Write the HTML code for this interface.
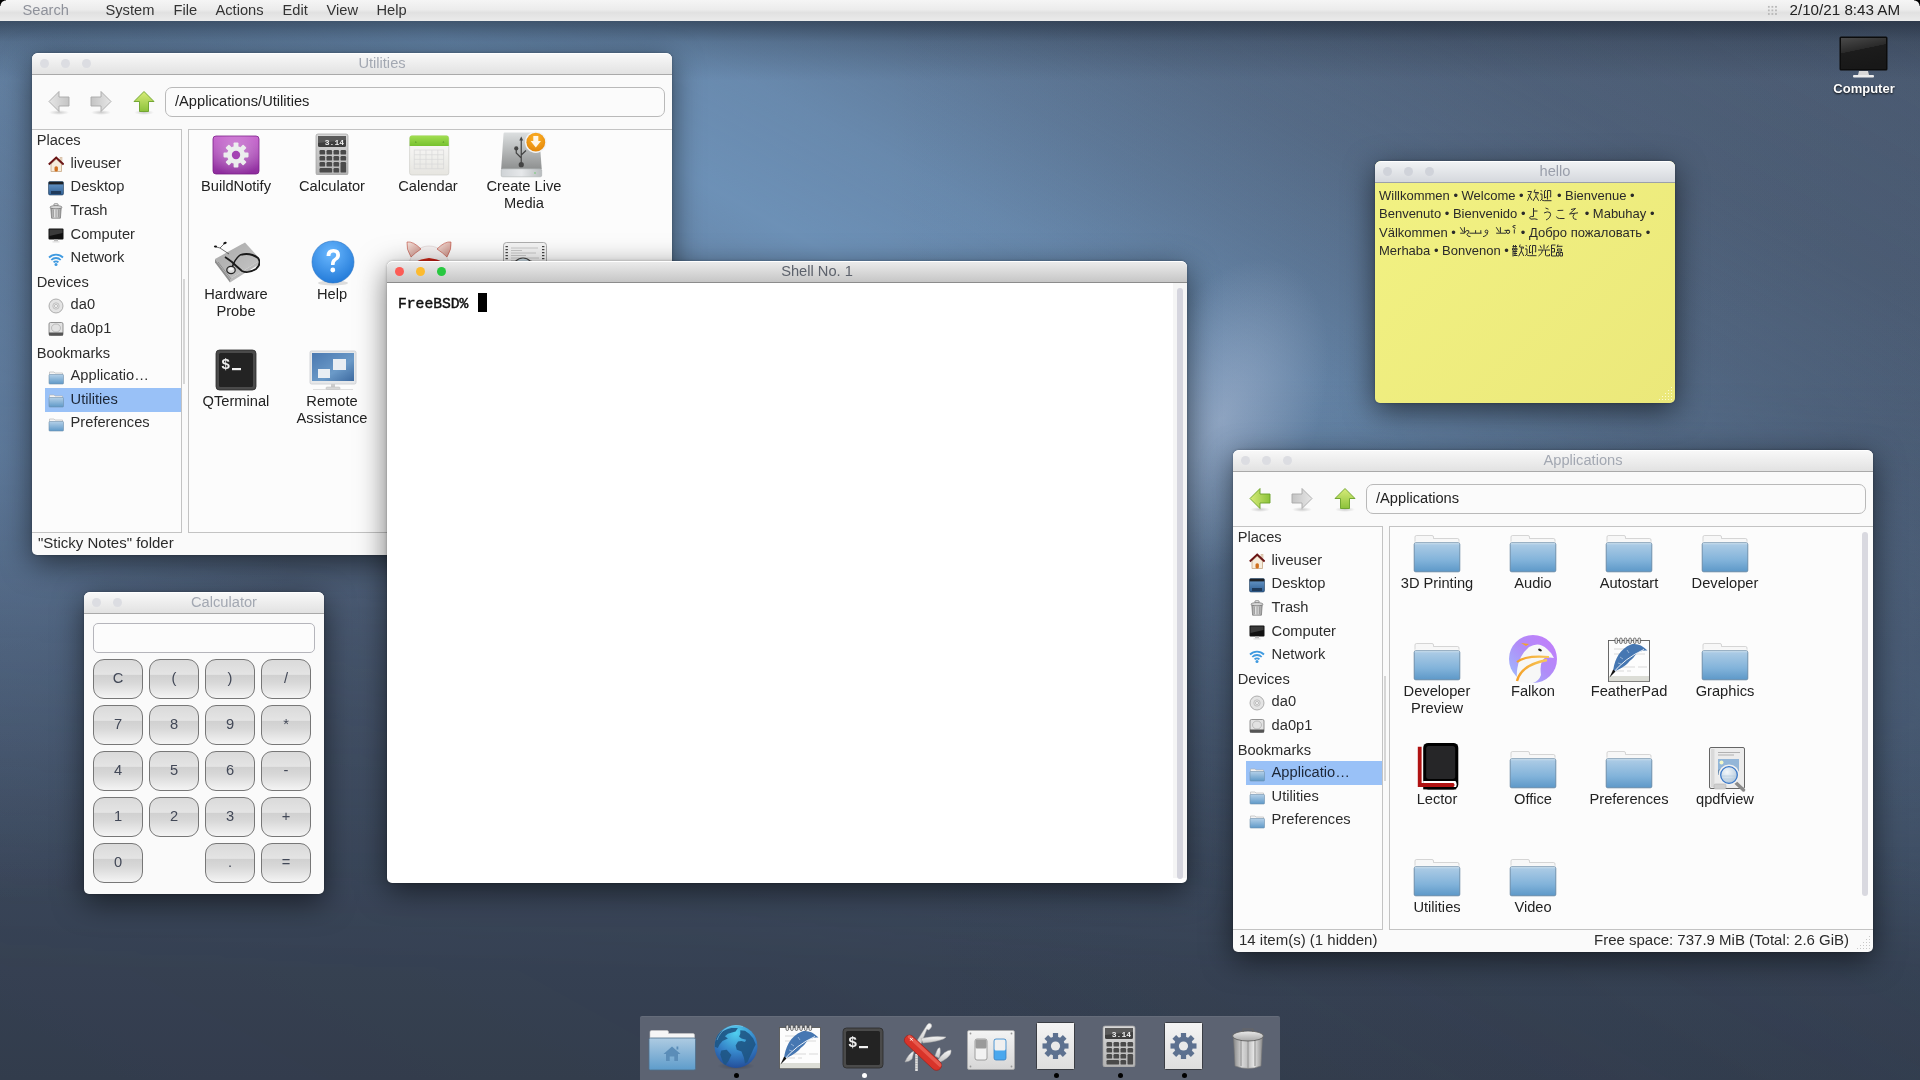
<!DOCTYPE html>
<html><head><meta charset="utf-8">
<style>*{box-sizing:border-box}
html,body{margin:0;padding:0}
body{width:1920px;height:1080px;overflow:hidden;position:relative;font-family:"Liberation Sans",sans-serif;font-size:14.67px;color:#2a2a2a;background:#47566d}
svg{display:block}
#bg{position:absolute;left:0;top:0;width:1920px;height:1080px;overflow:hidden;
background:linear-gradient(180deg,#4e5d74 0%,#4a586e 30%,#3f4a5e 58%,#374254 82%,#323b4b 100%);}
#bg div{position:absolute}
#mbshadow{left:0;top:21px;width:1920px;height:60px;background:linear-gradient(180deg,rgba(18,26,38,0.5),rgba(18,26,38,0.18) 35%,rgba(18,26,38,0))}
#menubar{position:absolute;will-change:transform;left:0;top:0;width:1920px;height:21px;background:linear-gradient(180deg,#f5f5f5 0%,#ececec 45%,#e1e1e1 60%,#ebebeb 100%)}
#menubar span{position:absolute;top:2px;font-size:14.67px;color:#333;line-height:17px;white-space:nowrap}
.grip{position:absolute;width:11px;height:11px;background-image:radial-gradient(circle,#b8b8b8 0.9px,transparent 1.1px);background-size:3.6px 3.6px}
.win{position:absolute;will-change:transform;background:#fafafa;border-radius:6px 6px 5px 5px;box-shadow:0 8px 30px rgba(0,0,0,0.55),0 0 3px rgba(0,0,0,0.3)}
.tb{position:absolute;left:0;top:0;right:0;height:22px;border-radius:6px 6px 0 0;background:linear-gradient(180deg,#f8f8f8,#e2e2e2);border-bottom:1px solid #a9a9a9;border-top:1px solid #fff}
.tb .t{position:absolute;right:0;top:0px;text-align:center;color:#a3a8b2;font-size:14.67px;line-height:18px;white-space:nowrap}
.tl{position:absolute;top:5px;width:9px;height:9px;border-radius:50%;background:#dcdde2}
.act .tb{background:linear-gradient(180deg,#ebebeb,#c6c6c6);border-bottom:1px solid #8c8c8c}
.act .tb .t{color:#5d626c}
.pf{position:absolute;border:1px solid #b9b9b9;border-radius:7px;background:#fbfbfb;color:#222;padding-left:9px;line-height:27px;white-space:nowrap}
.frame{position:absolute;border:1px solid #c3c3c3;background:#fcfcfc}
.sb{position:absolute;white-space:nowrap;line-height:17px;color:#2d2d2d}
.style2{color:#1c2636}
.sel{position:absolute;background:#99c1f7}
.ic{position:absolute}
.lbl{position:absolute;width:96px;text-align:center;line-height:17px;color:#222;white-space:nowrap}
.status{position:absolute;color:#2b2b2b;white-space:nowrap;line-height:17px;font-size:15px}
.sbar{position:absolute;background:#d9d9e0;border-radius:3px}
.cdisp{position:absolute;border:1px solid #b5b5bb;border-radius:5px;background:#fcfcfc}
.cbtn{position:absolute;width:49.5px;height:39.5px;border:1px solid #777;border-radius:11px;background:linear-gradient(180deg,#dadada 0%,#e4e4e4 38%,#d0d0d0 39%,#d8d8d8 60%,#f4f4f4 100%);text-align:center;color:#424857;line-height:37px;font-size:14.67px}
.note{position:absolute;left:4px;top:26px;font-size:13px;line-height:18.4px;color:#2a2a2a;white-space:nowrap}
.term{position:absolute;left:11px;top:34px;font-family:"Liberation Mono",monospace;font-weight:normal;-webkit-text-stroke:0.45px #111;font-size:14.67px;line-height:19px;color:#111;white-space:pre}
.cur{position:absolute;left:80px;top:-2px;width:9px;height:19px;background:#000}
.strack{position:absolute;right:0;top:22px;width:14px;bottom:5px;background:#f5f5f5}
.shandle{position:absolute;right:4px;top:27px;width:6px;bottom:4px;border-radius:3px;background:#d5d5de}
.deskicon{position:absolute}
.desklbl{position:absolute;will-change:transform;text-align:center;color:#fff;font-weight:bold;font-size:13px;text-shadow:0 1px 2px rgba(0,0,0,0.9)}
#dock{position:absolute;will-change:transform;left:640px;top:1016px;width:640px;height:64px;background:#5c6372;border-radius:2px 2px 0 0;box-shadow:inset 0 1px 0 rgba(255,255,255,0.06)}
.dot{position:absolute;width:5px;height:5px;border-radius:50%}
.grip2{position:absolute;right:3px;bottom:3px;width:14px;height:14px;background-image:radial-gradient(circle,#c8c8c8 0.8px,transparent 1px);background-size:3px 3px;clip-path:polygon(100% 0,100% 100%,0 100%)}
.split{position:absolute;width:2px;height:105px;background:#d6d6d6}
.corner{position:absolute;width:6px;height:6px;background:radial-gradient(circle at 6px 6px,transparent 5px,#000 6px);z-index:10}
.gap{display:inline-block;height:1px}
.glyphs{position:absolute;left:0;top:0}
</style></head><body>
<div id="bg">
 <div style="left:0;top:0;width:1920px;height:1080px;background:linear-gradient(29deg,rgba(122,166,210,0.1) 0%,rgba(122,166,210,0.2) 25%,rgba(122,166,210,0.35) 40%,rgba(122,166,210,0.55) 52%,rgba(122,166,210,0.72) 60%,rgba(122,166,210,0.62) 66%,rgba(122,166,210,0.42) 72%,rgba(122,166,210,0.25) 78%,rgba(122,166,210,0.12) 86%,rgba(122,166,210,0.05) 100%);-webkit-mask-image:linear-gradient(180deg,#000 0%,#000 35%,rgba(0,0,0,0.5) 60%,rgba(0,0,0,0.1) 90%)"></div>
 <div style="left:0;top:0;width:1920px;height:1080px;background:linear-gradient(90deg,rgba(28,36,50,0) 45%,rgba(28,36,50,0.1) 100%)"></div>
 <div style="left:-300px;top:0px;width:600px;height:900px;border-radius:50%;background:radial-gradient(closest-side,rgba(105,140,180,0.5),rgba(105,140,180,0))"></div>
 <div style="left:1125px;top:250px;width:190px;height:340px;transform:rotate(22deg);background:radial-gradient(closest-side,rgba(170,185,210,0.6),rgba(170,185,210,0))"></div>
 <div id="mbshadow"></div>
</div>
<div id="menubar">
 <span style="left:22.5px;color:#8e919a">Search</span>
 <span style="left:105.5px">System</span>
 <span style="left:173.5px">File</span>
 <span style="left:215.5px">Actions</span>
 <span style="left:282.5px">Edit</span>
 <span style="left:326.5px">View</span>
 <span style="left:376.5px">Help</span>
 <div class="grip" style="left:1767px;top:5px"></div>
 <span style="left:1789.5px;top:1px;color:#222;font-size:15.2px">2/10/21 8:43 AM</span>
</div>

<div class="deskicon" style="left:1839px;top:36px">
 <svg width="50" height="43" viewBox="0 0 50 43"><defs><linearGradient id="mong" x1="0" y1="0" x2="0.3" y2="1"><stop offset="0" stop-color="#4a4a4a"/><stop offset="0.45" stop-color="#2a2a2a"/><stop offset="0.46" stop-color="#1c1c1c"/><stop offset="1" stop-color="#181818"/></linearGradient></defs>
 <rect x="0.5" y="0.5" width="48" height="34" rx="1.5" fill="#0c0c0c"/><rect x="2" y="2" width="45" height="31" fill="url(#mong)"/>
 <path d="M20 35 H29 L30 39 H19 Z" fill="#d8d8d8"/><rect x="14" y="39" width="21" height="2.5" rx="1" fill="#ededed"/></svg>
</div>
<div class="desklbl" style="left:1814px;top:80.5px;width:100px">Computer</div>
<div class="corner" style="left:0;top:0"></div><div class="corner" style="right:0;top:0;transform:scaleX(-1)"></div>

<div class="win" id="util" style="left:32px;top:53px;width:640px;height:502px">
 <div class="tb"><div class="tl" style="left:8px"></div><div class="tl" style="left:29px"></div><div class="tl" style="left:50px"></div><div class="t" style="left:60px">Utilities</div></div>
 <div class="ic" style="left:15px;top:37px"><svg width="24" height="26" viewBox="0 0 24 26">
<defs><linearGradient id="agb0" x1="0" y1="0" x2="0" y2="1"><stop offset="0" stop-color="#e6e6e6"/><stop offset="1" stop-color="#c4c4c4"/></linearGradient>
<radialGradient id="asb0"><stop offset="0" stop-color="#000" stop-opacity="0.18"/><stop offset="1" stop-color="#000" stop-opacity="0"/></radialGradient></defs>
<ellipse cx="12" cy="22.5" rx="10" ry="2.5" fill="url(#asb0)"/>
<g transform="rotate(-90 12 11.5)"><path d="M12 1.5 L22 11.5 H16.5 V21.5 H7.5 V11.5 H2 Z" fill="url(#agb0)" stroke="#a8a8a8" stroke-width="0.9" stroke-linejoin="miter"/></g>
</svg></div><div class="ic" style="left:57px;top:37px"><svg width="24" height="26" viewBox="0 0 24 26">
<defs><linearGradient id="agf0" x1="0" y1="0" x2="0" y2="1"><stop offset="0" stop-color="#e6e6e6"/><stop offset="1" stop-color="#c4c4c4"/></linearGradient>
<radialGradient id="asf0"><stop offset="0" stop-color="#000" stop-opacity="0.18"/><stop offset="1" stop-color="#000" stop-opacity="0"/></radialGradient></defs>
<ellipse cx="12" cy="22.5" rx="10" ry="2.5" fill="url(#asf0)"/>
<g transform="rotate(90 12 11.5)"><path d="M12 1.5 L22 11.5 H16.5 V21.5 H7.5 V11.5 H2 Z" fill="url(#agf0)" stroke="#a8a8a8" stroke-width="0.9" stroke-linejoin="miter"/></g>
</svg></div><div class="ic" style="left:100px;top:37px"><svg width="24" height="26" viewBox="0 0 24 26">
<defs><linearGradient id="agu0" x1="0" y1="0" x2="0" y2="1"><stop offset="0" stop-color="#d8ec7a"/><stop offset="1" stop-color="#8cc23a"/></linearGradient>
<radialGradient id="asu0"><stop offset="0" stop-color="#000" stop-opacity="0.18"/><stop offset="1" stop-color="#000" stop-opacity="0"/></radialGradient></defs>
<ellipse cx="12" cy="22.5" rx="10" ry="2.5" fill="url(#asu0)"/>
<g transform="rotate(0 12 11.5)"><path d="M12 1.5 L22 11.5 H16.5 V21.5 H7.5 V11.5 H2 Z" fill="url(#agu0)" stroke="#6aa028" stroke-width="0.9" stroke-linejoin="miter"/></g>
</svg></div>
 <div class="pf" style="left:133px;top:34px;width:500px;height:30px">/Applications/Utilities</div>
 <div class="frame" style="left:0;top:76px;width:150px;height:404px;border-left:none"></div>
 <div class="frame" style="left:156px;top:76px;width:484px;height:404px;border-right:none"></div>
 <div class="split" style="left:151px;top:226px"></div>
 <div class="sel" style="left:13px;top:335.0px;width:136px;height:23.5px"></div><div class="sb" style="left:4.7px;top:79.2px">Places</div><div class="ic" style="left:16px;top:103.1px"><svg width="16" height="16" viewBox="0 0 16 16" >
<rect x="12" y="1.5" width="2" height="4" fill="#e9d9c4" stroke="#c9a98a" stroke-width="0.5"/>
<path d="M3 8 L3 15.5 L13.5 15.5 L13.5 8 L8.2 3.2 Z" fill="#f6ecdc" stroke="#c8a886" stroke-width="0.8"/>
<path d="M0.8 8.6 L8.2 1.6 L15.6 8.6" fill="none" stroke="#6a1414" stroke-width="2"/>
<rect x="6.5" y="10.2" width="3.4" height="5.3" rx="1.6" fill="#d0701e"/>
</svg></div><div class="sb" style="left:38.6px;top:101.8px">liveuser</div><div class="ic" style="left:16px;top:126.7px"><svg width="16" height="16" viewBox="0 0 16 16" >
<defs><linearGradient id="dkg" x1="0" y1="0" x2="0" y2="1"><stop offset="0" stop-color="#6b9bcc"/><stop offset="1" stop-color="#2f5e92"/></linearGradient></defs>
<rect x="0.5" y="1.5" width="15" height="13.5" rx="1.5" fill="url(#dkg)" stroke="#24405e" stroke-width="0.6"/>
<rect x="0.8" y="1.8" width="14.4" height="2.6" fill="#1d2126"/>
<rect x="3" y="11" width="10" height="3" fill="#1f3a5a"/>
</svg></div><div class="sb" style="left:38.6px;top:125.4px">Desktop</div><div class="ic" style="left:16px;top:150.3px"><svg width="16" height="16" viewBox="0 0 16 16" >
<defs><linearGradient id="tsg" x1="0" y1="0" x2="1" y2="0"><stop offset="0" stop-color="#9a9a9a"/><stop offset="0.4" stop-color="#e8e8e8"/><stop offset="1" stop-color="#a0a0a0"/></linearGradient></defs>
<rect x="6" y="0.8" width="4" height="2.2" rx="0.5" fill="none" stroke="#707070" stroke-width="0.8"/>
<path d="M2.8 5 L13.2 5 L12.4 15.2 L3.6 15.2 Z" fill="url(#tsg)" stroke="#707070" stroke-width="0.7"/>
<ellipse cx="8" cy="4.2" rx="6" ry="1.6" fill="#d8d8d8" stroke="#707070" stroke-width="0.7"/>
<path d="M5.3 6.5 V14 M8 6.5 V14.5 M10.7 6.5 V14" stroke="#8a8a8a" stroke-width="0.8"/>
</svg></div><div class="sb" style="left:38.6px;top:149.0px">Trash</div><div class="ic" style="left:16px;top:173.9px"><svg width="16" height="16" viewBox="0 0 16 16" >
<rect x="0.5" y="1.5" width="15" height="11" rx="1" fill="#111"/>
<path d="M1.5 2.5 H14.5 V6 L1.5 9 Z" fill="#3a3a3a"/>
<rect x="6" y="12.5" width="4" height="2" fill="#bbb"/>
<rect x="4.5" y="14.3" width="7" height="1.2" fill="#ddd"/>
</svg></div><div class="sb" style="left:38.6px;top:172.6px">Computer</div><div class="ic" style="left:16px;top:197.5px"><svg width="16" height="16" viewBox="0 0 16 16" >
<path d="M1 6.5 A10 10 0 0 1 15 6.5" fill="none" stroke="#3f9ae0" stroke-width="1.8"/>
<path d="M3.3 9 A6.5 6.5 0 0 1 12.7 9" fill="none" stroke="#3f9ae0" stroke-width="1.8"/>
<path d="M5.6 11.4 A3.2 3.2 0 0 1 10.4 11.4" fill="none" stroke="#3f9ae0" stroke-width="1.8"/>
<circle cx="8" cy="13.6" r="1.5" fill="#3f9ae0"/>
</svg></div><div class="sb" style="left:38.6px;top:196.2px">Network</div><div class="sb" style="left:4.7px;top:220.8px">Devices</div><div class="ic" style="left:16px;top:244.7px"><svg width="16" height="16" viewBox="0 0 16 16" >
<circle cx="8" cy="8" r="7" fill="#e4e4e4" stroke="#9d9d9d" stroke-width="0.8"/>
<circle cx="8" cy="8" r="3.2" fill="none" stroke="#b8b8b8" stroke-width="0.8"/>
<circle cx="8" cy="8" r="1.5" fill="#fff" stroke="#999" stroke-width="0.6"/>
</svg></div><div class="sb" style="left:38.6px;top:243.4px">da0</div><div class="ic" style="left:16px;top:268.3px"><svg width="16" height="16" viewBox="0 0 16 16" >
<rect x="1" y="1.5" width="14" height="13" rx="1.5" fill="#e2e2e2" stroke="#7a7a7a" stroke-width="0.8"/>
<ellipse cx="8" cy="7" rx="4.5" ry="4" fill="none" stroke="#aaa" stroke-width="0.7"/>
<rect x="1" y="11.5" width="14" height="3" fill="#555"/>
</svg></div><div class="sb" style="left:38.6px;top:267.0px">da0p1</div><div class="sb" style="left:4.7px;top:291.6px">Bookmarks</div><div class="ic" style="left:16px;top:315.5px"><svg width="16" height="16" viewBox="0 0 16 16" >
<path d="M1.5 3 H6 L7 4 H14.5 V7 H1.5 Z" fill="#f4f4f4" stroke="#b0b0b0" stroke-width="0.6"/>
<rect x="1" y="5.5" width="14.5" height="9.5" rx="0.8" fill="url(#fg16)" stroke="#6e90ad" stroke-width="0.6"/>
<defs><linearGradient id="fg16" x1="0" y1="0" x2="0" y2="1"><stop offset="0" stop-color="#b4d0e8"/><stop offset="1" stop-color="#5f99c8"/></linearGradient></defs>
</svg></div><div class="sb" style="left:38.6px;top:314.2px">Applicatio…</div><div class="ic" style="left:16px;top:339.1px"><svg width="16" height="16" viewBox="0 0 16 16" >
<path d="M1.5 3 H6 L7 4 H14.5 V7 H1.5 Z" fill="#f4f4f4" stroke="#b0b0b0" stroke-width="0.6"/>
<rect x="1" y="5.5" width="14.5" height="9.5" rx="0.8" fill="url(#fg16)" stroke="#6e90ad" stroke-width="0.6"/>
<defs><linearGradient id="fg16" x1="0" y1="0" x2="0" y2="1"><stop offset="0" stop-color="#b4d0e8"/><stop offset="1" stop-color="#5f99c8"/></linearGradient></defs>
</svg></div><div class="sb style2" style="left:38.6px;top:337.8px">Utilities</div><div class="ic" style="left:16px;top:362.7px"><svg width="16" height="16" viewBox="0 0 16 16" >
<path d="M1.5 3 H6 L7 4 H14.5 V7 H1.5 Z" fill="#f4f4f4" stroke="#b0b0b0" stroke-width="0.6"/>
<rect x="1" y="5.5" width="14.5" height="9.5" rx="0.8" fill="url(#fg16)" stroke="#6e90ad" stroke-width="0.6"/>
<defs><linearGradient id="fg16" x1="0" y1="0" x2="0" y2="1"><stop offset="0" stop-color="#b4d0e8"/><stop offset="1" stop-color="#5f99c8"/></linearGradient></defs>
</svg></div><div class="sb" style="left:38.6px;top:361.4px">Preferences</div>
 <div class="ic" style="left:180px;top:78px"><svg width="48" height="48" viewBox="0 0 48 48" >
<defs><linearGradient id="bng" x1="0" y1="0" x2="0" y2="1"><stop offset="0" stop-color="#c96bd0"/><stop offset="1" stop-color="#8c2b9c"/></linearGradient>
<radialGradient id="bnr" cx="0.5" cy="0.45" r="0.6"><stop offset="0" stop-color="#fff" stop-opacity="0.35"/><stop offset="1" stop-color="#fff" stop-opacity="0"/></radialGradient></defs>
<rect x="1" y="5" width="46" height="38" rx="3" fill="url(#bng)" stroke="#7a1d87" stroke-width="0.8"/>
<rect x="1" y="5" width="46" height="38" rx="3" fill="url(#bnr)"/>
<g transform="translate(24,23)" fill="#eef0f0">
<path d="M-2.3 -12 H2.3 L2.9 -8.6 L5.6 -7.5 L8.4 -9.5 L11.7 -6.2 L9.7 -3.4 L10.8 -0.7 L14 -0.1 V4.5 ... " fill="none"/>
</g>
<g transform="translate(24,24)">
<circle r="9" fill="#eceeee"/>
<g fill="#eceeee">
<rect x="-2.4" y="-12.5" width="4.8" height="6" rx="0.8"/>
<rect x="-2.4" y="6.5" width="4.8" height="6" rx="0.8"/>
<rect x="-12.5" y="-2.4" width="6" height="4.8" rx="0.8"/>
<rect x="6.5" y="-2.4" width="6" height="4.8" rx="0.8"/>
<rect x="-2.4" y="-12.5" width="4.8" height="6" rx="0.8" transform="rotate(45)"/>
<rect x="-2.4" y="-12.5" width="4.8" height="6" rx="0.8" transform="rotate(135)"/>
<rect x="-2.4" y="-12.5" width="4.8" height="6" rx="0.8" transform="rotate(225)"/>
<rect x="-2.4" y="-12.5" width="4.8" height="6" rx="0.8" transform="rotate(315)"/>
</g>
<circle r="4.2" fill="#a444b3"/>
</g>
</svg></div><div class="lbl" style="left:156px;top:125.0px">BuildNotify</div><div class="ic" style="left:281px;top:80px"><svg width="38" height="42" viewBox="0 0 38 42" >
<defs><linearGradient id="cgu" x1="0" y1="0" x2="0" y2="1"><stop offset="0" stop-color="#d8d8d8"/><stop offset="1" stop-color="#b4b4b4"/></linearGradient></defs>
<rect x="3" y="1" width="32" height="41" rx="2" fill="url(#cgu)" stroke="#a0a0a0" stroke-width="0.7"/>
<rect x="5" y="3" width="28" height="11" rx="1.5" fill="#3e3e3e"/>
<path d="M5 3 H33 V7 L5 10 Z" fill="#5a5a5a"/>
<text x="31" y="11.5" font-family="Liberation Mono" font-weight="bold" font-size="8" fill="#eee" text-anchor="end">3.14</text>
<rect x="6.5" y="17" width="5.6" height="4.6" rx="1.2" fill="#4a4a4a"/><rect x="13.5" y="17" width="5.6" height="4.6" rx="1.2" fill="#4a4a4a"/><rect x="20.5" y="17" width="5.6" height="4.6" rx="1.2" fill="#4a4a4a"/><rect x="27.5" y="17" width="5.6" height="4.6" rx="1.2" fill="#4a4a4a"/><rect x="6.5" y="23" width="5.6" height="4.6" rx="1.2" fill="#4a4a4a"/><rect x="13.5" y="23" width="5.6" height="4.6" rx="1.2" fill="#4a4a4a"/><rect x="20.5" y="23" width="5.6" height="4.6" rx="1.2" fill="#4a4a4a"/><rect x="27.5" y="23" width="5.6" height="4.6" rx="1.2" fill="#4a4a4a"/><rect x="6.5" y="29" width="5.6" height="4.6" rx="1.2" fill="#4a4a4a"/><rect x="13.5" y="29" width="5.6" height="4.6" rx="1.2" fill="#4a4a4a"/><rect x="20.5" y="29" width="5.6" height="4.6" rx="1.2" fill="#4a4a4a"/><rect x="6.5" y="35" width="12.6" height="4.6" rx="1.2" fill="#4a4a4a"/><rect x="20.5" y="35" width="5.6" height="4.6" rx="1.2" fill="#4a4a4a"/><rect x="27.5" y="29" width="5.6" height="10.6" rx="1.2" fill="#4a4a4a"/>
</svg></div><div class="lbl" style="left:252px;top:125.0px">Calculator</div><div class="ic" style="left:372px;top:77px"><svg width="48" height="48" viewBox="0 0 48 48" >
<defs><linearGradient id="calg" x1="0" y1="0" x2="0" y2="1"><stop offset="0" stop-color="#fbfbfb"/><stop offset="1" stop-color="#e6e5e0"/></linearGradient>
<linearGradient id="calh" x1="0" y1="0" x2="0" y2="1"><stop offset="0" stop-color="#a2de52"/><stop offset="1" stop-color="#76c12e"/></linearGradient></defs>
<rect x="5.6" y="6" width="39.2" height="39" rx="2.2" fill="url(#calg)" stroke="#cfcfca" stroke-width="0.7"/>
<path d="M5.6 8.2 Q5.6 5.5 8 5.5 H42.4 Q44.8 5.5 44.8 8.2 V16 H5.6 Z" fill="url(#calh)"/>
<path d="M10.8 12.6 L11.8 11.2 L12.8 12.6 Z M38.4 12.6 L39.4 11.2 L40.4 12.6 Z" fill="#4e8a22"/>
<rect x="10.2" y="20" width="29.5" height="18.8" fill="none" stroke="#d8d8d8" stroke-width="0.7"/>
<line x1="16.1" y1="20" x2="16.1" y2="38.8" stroke="#d8d8d8" stroke-width="0.7"/><line x1="22.0" y1="20" x2="22.0" y2="38.8" stroke="#d8d8d8" stroke-width="0.7"/><line x1="27.900000000000002" y1="20" x2="27.900000000000002" y2="38.8" stroke="#d8d8d8" stroke-width="0.7"/><line x1="33.8" y1="20" x2="33.8" y2="38.8" stroke="#d8d8d8" stroke-width="0.7"/><line x1="10.2" y1="24.7" x2="39.7" y2="24.7" stroke="#d8d8d8" stroke-width="0.7"/><line x1="10.2" y1="29.4" x2="39.7" y2="29.4" stroke="#d8d8d8" stroke-width="0.7"/><line x1="10.2" y1="34.1" x2="39.7" y2="34.1" stroke="#d8d8d8" stroke-width="0.7"/>
</svg></div><div class="lbl" style="left:348px;top:125.0px">Calendar</div><div class="ic" style="left:468px;top:77px"><svg width="48" height="48" viewBox="0 0 48 48" >
<defs><linearGradient id="lmg" x1="0" y1="0" x2="0" y2="1"><stop offset="0" stop-color="#dcdfe0"/><stop offset="1" stop-color="#8e9090"/></linearGradient>
<linearGradient id="lms" x1="0" y1="0" x2="1" y2="0"><stop offset="0" stop-color="#cfd3d6"/><stop offset="0.5" stop-color="#e6e8ea"/><stop offset="1" stop-color="#b8bcbe"/></linearGradient>
<radialGradient id="lmo" cx="0.5" cy="0.3" r="0.7"><stop offset="0" stop-color="#ffb428"/><stop offset="1" stop-color="#e4870a"/></radialGradient></defs>
<path d="M4.5 2.6 H37.5 Q39 2.6 39.2 4 L41.7 39 H1.2 L3.5 4 Q3.7 2.6 4.5 2.6 Z" fill="url(#lmg)"/>
<rect x="1.2" y="38.8" width="40.5" height="8" rx="1.5" fill="url(#lms)" stroke="#a5a9ab" stroke-width="0.5"/>
<circle cx="35" cy="43" r="0.8" fill="#6c6"/>
<path d="M21.25 9 V34.7 M16.25 18.4 V23 L21.25 28 M21.25 25 L26 20.5" stroke="#444" stroke-width="1.2" fill="none"/>
<path d="M19.3 10.5 L21.25 6.5 L23.2 10.5 Z" fill="#444"/>
<circle cx="21.25" cy="34.7" r="2.6" fill="#444"/><circle cx="16.25" cy="18.4" r="2.1" fill="#444"/>
<circle cx="35.8" cy="12.2" r="10.8" fill="#f2f4f6"/>
<circle cx="35.8" cy="12.2" r="9.4" fill="url(#lmo)"/>
<path d="M33.3 6 H38.3 V11 H41 L35.8 17.5 L30.6 11 H33.3 Z" fill="#fff6e6"/>
</svg></div><div class="lbl" style="left:444px;top:125.0px">Create Live</div><div class="lbl" style="left:444px;top:142.0px">Media</div><div class="ic" style="left:180px;top:185px"><svg width="48" height="48" viewBox="0 0 48 48" >
<defs><linearGradient id="hpg" x1="0" y1="0" x2="1" y2="1"><stop offset="0" stop-color="#a8a8a8"/><stop offset="1" stop-color="#c8c8c8"/></linearGradient></defs>
<path d="M3 21 L33 4.5 L49 22 L18 41 Z" fill="url(#hpg)"/>
<path d="M3 21 L18 41 L18 44.5 L3 24.5 Z" fill="#8e8e8e"/>
<path d="M18 41 L49 22 L49 25 L18 44.5 Z" fill="#b9b9b9"/>
<path d="M6 24 L19 41" stroke="#777" stroke-width="0.6"/>
<path d="M28 17 Q38 14 46 20 Q50 26 44 31 Q36 36 30 33 Q24 28 20 24 Q16 21 13 19" fill="none" stroke="#1a1a1a" stroke-width="1.8"/>
<path d="M28 17 Q22 22 20 30" fill="none" stroke="#1a1a1a" stroke-width="1.6"/>
<path d="M2.5 8.5 L8 10 L17 16 M12.5 5.5 L8 10" fill="none" stroke="#333" stroke-width="0.7"/>
<ellipse cx="3.5" cy="8.5" rx="1.6" ry="1.1" fill="#111"/>
<ellipse cx="13" cy="5" rx="1.8" ry="1.1" fill="#111" transform="rotate(-25 13 5)"/>
<ellipse cx="19" cy="32" rx="4.2" ry="3.6" fill="#d8d8d8" stroke="#222" stroke-width="1.2"/>
<ellipse cx="19" cy="31" rx="2.2" ry="1.6" fill="#f4f4f4"/>
</svg></div><div class="lbl" style="left:156px;top:232.5px">Hardware</div><div class="lbl" style="left:156px;top:249.5px">Probe</div><div class="ic" style="left:277px;top:186px"><svg width="48" height="48" viewBox="0 0 48 48" >
<defs><radialGradient id="hlg" cx="0.45" cy="0.3" r="0.75"><stop offset="0" stop-color="#6ab8ff"/><stop offset="1" stop-color="#1f77d6"/></radialGradient></defs>
<ellipse cx="24" cy="44" rx="15" ry="2.5" fill="#000" opacity="0.12"/>
<circle cx="24" cy="23" r="21" fill="url(#hlg)" stroke="#2a74c4" stroke-width="0.6"/>
<path d="M17.5 17 Q17.5 10 24.5 10 Q31 10 31 16 Q31 19.5 27.5 21.5 Q25.5 22.8 25.5 26 H22 Q21.8 21.5 24.8 19.6 Q27.2 18.2 27.2 16.2 Q27.2 13.6 24.4 13.6 Q21.5 13.6 21.4 17 Z" fill="#fff"/>
<circle cx="23.8" cy="31" r="2.4" fill="#fff"/>
</svg></div><div class="lbl" style="left:252px;top:232.5px">Help</div><div class="ic" style="left:373px;top:186px"><svg width="48" height="48" viewBox="0 0 48 48" >
<defs><radialGradient id="dvg" cx="0.35" cy="0.3" r="0.9"><stop offset="0" stop-color="#e83a1a"/><stop offset="0.6" stop-color="#b81010"/><stop offset="1" stop-color="#600505"/></radialGradient>
<linearGradient id="dvh" x1="0" y1="0" x2="1" y2="1"><stop offset="0" stop-color="#f7e6e0"/><stop offset="1" stop-color="#c98a80"/></linearGradient></defs>
<circle cx="24" cy="27" r="20" fill="#f6f2f2" stroke="#e2d8d8" stroke-width="0.8"/>
<path d="M3 26 Q6 13 24 11 Q42 13 45 26 Q44 46 24 47 Q4 46 3 26 Z" fill="url(#dvg)" transform="translate(0,8)"/>
<path d="M2 3 Q8 2 16 10 Q10 14 6 18 Q1 10 2 3 Z" fill="url(#dvh)" stroke="#c04a3a" stroke-width="0.6"/>
<path d="M46 3 Q40 2 32 10 Q38 14 42 18 Q47 10 46 3 Z" fill="url(#dvh)" stroke="#c04a3a" stroke-width="0.6"/>
</svg></div><div class="ic" style="left:470px;top:187px"><svg width="48" height="48" viewBox="0 0 48 48" >
<rect x="1.5" y="2.5" width="43" height="44" rx="3" fill="#f4f4f4" stroke="#9a9a9a" stroke-width="0.8"/>
<rect x="3.5" y="6" width="2.4" height="1.2" fill="#444"/><rect x="40" y="6" width="2.4" height="1.2" fill="#444"/><rect x="3.5" y="9" width="2.4" height="1.2" fill="#444"/><rect x="40" y="9" width="2.4" height="1.2" fill="#444"/><rect x="3.5" y="12" width="2.4" height="1.2" fill="#444"/><rect x="40" y="12" width="2.4" height="1.2" fill="#444"/><rect x="3.5" y="15" width="2.4" height="1.2" fill="#444"/><rect x="40" y="15" width="2.4" height="1.2" fill="#444"/><rect x="3.5" y="18" width="2.4" height="1.2" fill="#444"/><rect x="40" y="18" width="2.4" height="1.2" fill="#444"/><rect x="3.5" y="21" width="2.4" height="1.2" fill="#444"/><rect x="40" y="21" width="2.4" height="1.2" fill="#444"/><rect x="3.5" y="24" width="2.4" height="1.2" fill="#444"/><rect x="40" y="24" width="2.4" height="1.2" fill="#444"/><rect x="3.5" y="27" width="2.4" height="1.2" fill="#444"/><rect x="40" y="27" width="2.4" height="1.2" fill="#444"/><rect x="3.5" y="30" width="2.4" height="1.2" fill="#444"/><rect x="40" y="30" width="2.4" height="1.2" fill="#444"/><rect x="3.5" y="33" width="2.4" height="1.2" fill="#444"/><rect x="40" y="33" width="2.4" height="1.2" fill="#444"/><rect x="3.5" y="36" width="2.4" height="1.2" fill="#444"/><rect x="40" y="36" width="2.4" height="1.2" fill="#444"/><rect x="3.5" y="39" width="2.4" height="1.2" fill="#444"/><rect x="40" y="39" width="2.4" height="1.2" fill="#444"/><rect x="3.5" y="42" width="2.4" height="1.2" fill="#444"/><rect x="40" y="42" width="2.4" height="1.2" fill="#444"/>
<path d="M9 8 H36 M9 10.5 H20 M9 13 H34 M9 15.5 H24 M9 18 H37 M9 20.5 H30" stroke="#b5b5b5" stroke-width="0.7"/>
<circle cx="21" cy="28" r="10" fill="#cfe0ea" stroke="#444" stroke-width="1.2"/>
</svg></div><div class="ic" style="left:180px;top:293px"><svg width="48" height="48" viewBox="0 0 48 48" >
<rect x="4" y="4" width="40" height="40" rx="3.5" fill="#4a4a4a" stroke="#2a2a2a" stroke-width="0.8"/>
<rect x="7" y="7" width="34" height="34" rx="1.5" fill="#232323"/>
<text x="9.5" y="23" font-family="Liberation Sans" font-weight="bold" font-size="15" fill="#f0f0f0">$</text>
<rect x="20" y="22" width="9" height="2.2" fill="#f0f0f0"/>
</svg></div><div class="lbl" style="left:156px;top:340.2px">QTerminal</div><div class="ic" style="left:277px;top:295px"><svg width="48" height="48" viewBox="0 0 48 48" >
<defs><linearGradient id="rag" x1="0" y1="0" x2="1" y2="1"><stop offset="0" stop-color="#4a78b0"/><stop offset="0.6" stop-color="#6b9ac8"/><stop offset="1" stop-color="#3d6aa0"/></linearGradient></defs>
<rect x="1" y="3" width="46" height="33" rx="1.5" fill="#e6e8ea" stroke="#c9ccd0" stroke-width="0.8"/>
<rect x="3" y="5" width="42" height="28" fill="url(#rag)"/>
<rect x="24" y="11" width="13" height="11" fill="#e9eef3"/>
<rect x="9" y="21" width="12" height="9" fill="#e9eef3"/>
<rect x="22" y="36" width="4" height="3" fill="#ccc"/>
<rect x="17" y="39" width="14" height="2.5" rx="1" fill="#d8d8d8" stroke="#bbb" stroke-width="0.5"/>
<rect x="4" y="41" width="40" height="1" fill="#ccc" opacity="0.6"/>
</svg></div><div class="lbl" style="left:252px;top:340.2px">Remote</div><div class="lbl" style="left:252px;top:357.2px">Assistance</div>
 <div class="status" style="left:6px;top:480.5px">"Sticky Notes" folder</div>
</div>

<div class="win" id="calc" style="left:84px;top:592px;width:240px;height:302px">
 <div class="tb"><div class="tl" style="left:8px"></div><div class="tl" style="left:29px"></div><div class="t" style="left:40px">Calculator</div></div>
 <div class="cdisp" style="left:9px;top:31px;width:222px;height:30px"></div><div class="cbtn" style="left:9.3px;top:67px"><span>C</span></div><div class="cbtn" style="left:65.3px;top:67px"><span>(</span></div><div class="cbtn" style="left:121.3px;top:67px"><span>)</span></div><div class="cbtn" style="left:177.3px;top:67px"><span>/</span></div><div class="cbtn" style="left:9.3px;top:113px"><span>7</span></div><div class="cbtn" style="left:65.3px;top:113px"><span>8</span></div><div class="cbtn" style="left:121.3px;top:113px"><span>9</span></div><div class="cbtn" style="left:177.3px;top:113px"><span>*</span></div><div class="cbtn" style="left:9.3px;top:159px"><span>4</span></div><div class="cbtn" style="left:65.3px;top:159px"><span>5</span></div><div class="cbtn" style="left:121.3px;top:159px"><span>6</span></div><div class="cbtn" style="left:177.3px;top:159px"><span>-</span></div><div class="cbtn" style="left:9.3px;top:205px"><span>1</span></div><div class="cbtn" style="left:65.3px;top:205px"><span>2</span></div><div class="cbtn" style="left:121.3px;top:205px"><span>3</span></div><div class="cbtn" style="left:177.3px;top:205px"><span>+</span></div><div class="cbtn" style="left:9.3px;top:251px"><span>0</span></div><div class="cbtn" style="left:121.3px;top:251px"><span>.</span></div><div class="cbtn" style="left:177.3px;top:251px"><span>=</span></div>
</div>

<div class="win" id="apps" style="left:1233px;top:450px;width:640px;height:502px">
 <div class="tb"><div class="tl" style="left:8px"></div><div class="tl" style="left:29px"></div><div class="tl" style="left:50px"></div><div class="t" style="left:60px">Applications</div></div>
 <div class="ic" style="left:15px;top:37px"><svg width="24" height="26" viewBox="0 0 24 26">
<defs><linearGradient id="agb1" x1="0" y1="0" x2="0" y2="1"><stop offset="0" stop-color="#d8ec7a"/><stop offset="1" stop-color="#8cc23a"/></linearGradient>
<radialGradient id="asb1"><stop offset="0" stop-color="#000" stop-opacity="0.18"/><stop offset="1" stop-color="#000" stop-opacity="0"/></radialGradient></defs>
<ellipse cx="12" cy="22.5" rx="10" ry="2.5" fill="url(#asb1)"/>
<g transform="rotate(-90 12 11.5)"><path d="M12 1.5 L22 11.5 H16.5 V21.5 H7.5 V11.5 H2 Z" fill="url(#agb1)" stroke="#6aa028" stroke-width="0.9" stroke-linejoin="miter"/></g>
</svg></div><div class="ic" style="left:57px;top:37px"><svg width="24" height="26" viewBox="0 0 24 26">
<defs><linearGradient id="agf1" x1="0" y1="0" x2="0" y2="1"><stop offset="0" stop-color="#e6e6e6"/><stop offset="1" stop-color="#c4c4c4"/></linearGradient>
<radialGradient id="asf1"><stop offset="0" stop-color="#000" stop-opacity="0.18"/><stop offset="1" stop-color="#000" stop-opacity="0"/></radialGradient></defs>
<ellipse cx="12" cy="22.5" rx="10" ry="2.5" fill="url(#asf1)"/>
<g transform="rotate(90 12 11.5)"><path d="M12 1.5 L22 11.5 H16.5 V21.5 H7.5 V11.5 H2 Z" fill="url(#agf1)" stroke="#a8a8a8" stroke-width="0.9" stroke-linejoin="miter"/></g>
</svg></div><div class="ic" style="left:100px;top:37px"><svg width="24" height="26" viewBox="0 0 24 26">
<defs><linearGradient id="agu1" x1="0" y1="0" x2="0" y2="1"><stop offset="0" stop-color="#d8ec7a"/><stop offset="1" stop-color="#8cc23a"/></linearGradient>
<radialGradient id="asu1"><stop offset="0" stop-color="#000" stop-opacity="0.18"/><stop offset="1" stop-color="#000" stop-opacity="0"/></radialGradient></defs>
<ellipse cx="12" cy="22.5" rx="10" ry="2.5" fill="url(#asu1)"/>
<g transform="rotate(0 12 11.5)"><path d="M12 1.5 L22 11.5 H16.5 V21.5 H7.5 V11.5 H2 Z" fill="url(#agu1)" stroke="#6aa028" stroke-width="0.9" stroke-linejoin="miter"/></g>
</svg></div>
 <div class="pf" style="left:133px;top:34px;width:500px;height:30px">/Applications</div>
 <div class="frame" style="left:0;top:76px;width:150px;height:404px;border-left:none"></div>
 <div class="frame" style="left:156px;top:76px;width:484px;height:404px;border-right:none"></div>
 <div class="sbar" style="left:629px;top:82px;width:6px;height:364px"></div><div class="grip2"></div><div class="split" style="left:151px;top:676px;top:226px"></div>
 <div class="sel" style="left:13px;top:311.4px;width:136px;height:23.5px"></div><div class="sb" style="left:4.7px;top:79.2px">Places</div><div class="ic" style="left:16px;top:103.1px"><svg width="16" height="16" viewBox="0 0 16 16" >
<rect x="12" y="1.5" width="2" height="4" fill="#e9d9c4" stroke="#c9a98a" stroke-width="0.5"/>
<path d="M3 8 L3 15.5 L13.5 15.5 L13.5 8 L8.2 3.2 Z" fill="#f6ecdc" stroke="#c8a886" stroke-width="0.8"/>
<path d="M0.8 8.6 L8.2 1.6 L15.6 8.6" fill="none" stroke="#6a1414" stroke-width="2"/>
<rect x="6.5" y="10.2" width="3.4" height="5.3" rx="1.6" fill="#d0701e"/>
</svg></div><div class="sb" style="left:38.6px;top:101.8px">liveuser</div><div class="ic" style="left:16px;top:126.7px"><svg width="16" height="16" viewBox="0 0 16 16" >
<defs><linearGradient id="dkg" x1="0" y1="0" x2="0" y2="1"><stop offset="0" stop-color="#6b9bcc"/><stop offset="1" stop-color="#2f5e92"/></linearGradient></defs>
<rect x="0.5" y="1.5" width="15" height="13.5" rx="1.5" fill="url(#dkg)" stroke="#24405e" stroke-width="0.6"/>
<rect x="0.8" y="1.8" width="14.4" height="2.6" fill="#1d2126"/>
<rect x="3" y="11" width="10" height="3" fill="#1f3a5a"/>
</svg></div><div class="sb" style="left:38.6px;top:125.4px">Desktop</div><div class="ic" style="left:16px;top:150.3px"><svg width="16" height="16" viewBox="0 0 16 16" >
<defs><linearGradient id="tsg" x1="0" y1="0" x2="1" y2="0"><stop offset="0" stop-color="#9a9a9a"/><stop offset="0.4" stop-color="#e8e8e8"/><stop offset="1" stop-color="#a0a0a0"/></linearGradient></defs>
<rect x="6" y="0.8" width="4" height="2.2" rx="0.5" fill="none" stroke="#707070" stroke-width="0.8"/>
<path d="M2.8 5 L13.2 5 L12.4 15.2 L3.6 15.2 Z" fill="url(#tsg)" stroke="#707070" stroke-width="0.7"/>
<ellipse cx="8" cy="4.2" rx="6" ry="1.6" fill="#d8d8d8" stroke="#707070" stroke-width="0.7"/>
<path d="M5.3 6.5 V14 M8 6.5 V14.5 M10.7 6.5 V14" stroke="#8a8a8a" stroke-width="0.8"/>
</svg></div><div class="sb" style="left:38.6px;top:149.0px">Trash</div><div class="ic" style="left:16px;top:173.9px"><svg width="16" height="16" viewBox="0 0 16 16" >
<rect x="0.5" y="1.5" width="15" height="11" rx="1" fill="#111"/>
<path d="M1.5 2.5 H14.5 V6 L1.5 9 Z" fill="#3a3a3a"/>
<rect x="6" y="12.5" width="4" height="2" fill="#bbb"/>
<rect x="4.5" y="14.3" width="7" height="1.2" fill="#ddd"/>
</svg></div><div class="sb" style="left:38.6px;top:172.6px">Computer</div><div class="ic" style="left:16px;top:197.5px"><svg width="16" height="16" viewBox="0 0 16 16" >
<path d="M1 6.5 A10 10 0 0 1 15 6.5" fill="none" stroke="#3f9ae0" stroke-width="1.8"/>
<path d="M3.3 9 A6.5 6.5 0 0 1 12.7 9" fill="none" stroke="#3f9ae0" stroke-width="1.8"/>
<path d="M5.6 11.4 A3.2 3.2 0 0 1 10.4 11.4" fill="none" stroke="#3f9ae0" stroke-width="1.8"/>
<circle cx="8" cy="13.6" r="1.5" fill="#3f9ae0"/>
</svg></div><div class="sb" style="left:38.6px;top:196.2px">Network</div><div class="sb" style="left:4.7px;top:220.8px">Devices</div><div class="ic" style="left:16px;top:244.7px"><svg width="16" height="16" viewBox="0 0 16 16" >
<circle cx="8" cy="8" r="7" fill="#e4e4e4" stroke="#9d9d9d" stroke-width="0.8"/>
<circle cx="8" cy="8" r="3.2" fill="none" stroke="#b8b8b8" stroke-width="0.8"/>
<circle cx="8" cy="8" r="1.5" fill="#fff" stroke="#999" stroke-width="0.6"/>
</svg></div><div class="sb" style="left:38.6px;top:243.4px">da0</div><div class="ic" style="left:16px;top:268.3px"><svg width="16" height="16" viewBox="0 0 16 16" >
<rect x="1" y="1.5" width="14" height="13" rx="1.5" fill="#e2e2e2" stroke="#7a7a7a" stroke-width="0.8"/>
<ellipse cx="8" cy="7" rx="4.5" ry="4" fill="none" stroke="#aaa" stroke-width="0.7"/>
<rect x="1" y="11.5" width="14" height="3" fill="#555"/>
</svg></div><div class="sb" style="left:38.6px;top:267.0px">da0p1</div><div class="sb" style="left:4.7px;top:291.6px">Bookmarks</div><div class="ic" style="left:16px;top:315.5px"><svg width="16" height="16" viewBox="0 0 16 16" >
<path d="M1.5 3 H6 L7 4 H14.5 V7 H1.5 Z" fill="#f4f4f4" stroke="#b0b0b0" stroke-width="0.6"/>
<rect x="1" y="5.5" width="14.5" height="9.5" rx="0.8" fill="url(#fg16)" stroke="#6e90ad" stroke-width="0.6"/>
<defs><linearGradient id="fg16" x1="0" y1="0" x2="0" y2="1"><stop offset="0" stop-color="#b4d0e8"/><stop offset="1" stop-color="#5f99c8"/></linearGradient></defs>
</svg></div><div class="sb style2" style="left:38.6px;top:314.2px">Applicatio…</div><div class="ic" style="left:16px;top:339.1px"><svg width="16" height="16" viewBox="0 0 16 16" >
<path d="M1.5 3 H6 L7 4 H14.5 V7 H1.5 Z" fill="#f4f4f4" stroke="#b0b0b0" stroke-width="0.6"/>
<rect x="1" y="5.5" width="14.5" height="9.5" rx="0.8" fill="url(#fg16)" stroke="#6e90ad" stroke-width="0.6"/>
<defs><linearGradient id="fg16" x1="0" y1="0" x2="0" y2="1"><stop offset="0" stop-color="#b4d0e8"/><stop offset="1" stop-color="#5f99c8"/></linearGradient></defs>
</svg></div><div class="sb" style="left:38.6px;top:337.8px">Utilities</div><div class="ic" style="left:16px;top:362.7px"><svg width="16" height="16" viewBox="0 0 16 16" >
<path d="M1.5 3 H6 L7 4 H14.5 V7 H1.5 Z" fill="#f4f4f4" stroke="#b0b0b0" stroke-width="0.6"/>
<rect x="1" y="5.5" width="14.5" height="9.5" rx="0.8" fill="url(#fg16)" stroke="#6e90ad" stroke-width="0.6"/>
<defs><linearGradient id="fg16" x1="0" y1="0" x2="0" y2="1"><stop offset="0" stop-color="#b4d0e8"/><stop offset="1" stop-color="#5f99c8"/></linearGradient></defs>
</svg></div><div class="sb" style="left:38.6px;top:361.4px">Preferences</div>
 <div class="ic" style="left:180px;top:79.89999999999998px"><svg width="48" height="48" viewBox="0 0 48 48" >
<defs><linearGradient id="fgr0" x1="0" y1="0" x2="0" y2="1"><stop offset="0" stop-color="#afcde6"/><stop offset="0.6" stop-color="#82b3da"/><stop offset="1" stop-color="#5d98c8"/></linearGradient></defs>
<path d="M2 13 V7 Q2 5.5 3.5 5.5 H19 Q20.5 5.5 20.5 7 V8.5 H44.5 Q46 8.5 46 10 V14 H2 Z" fill="#f7f7f7" stroke="#c4c4c4" stroke-width="0.7"/>
<rect x="1.5" y="11.5" width="45" height="7" fill="#fafafa"/>
<rect x="1.2" y="12.8" width="45.6" height="29" rx="1.5" fill="url(#fgr0)" stroke="#5e7f9c" stroke-width="0.8"/>
<rect x="1.7" y="13.2" width="44.6" height="1" fill="#d4e6f4" opacity="0.8"/>
</svg></div><div class="lbl" style="left:156px;top:125.1px">3D Printing</div><div class="ic" style="left:276px;top:79.89999999999998px"><svg width="48" height="48" viewBox="0 0 48 48" >
<defs><linearGradient id="fgr1" x1="0" y1="0" x2="0" y2="1"><stop offset="0" stop-color="#afcde6"/><stop offset="0.6" stop-color="#82b3da"/><stop offset="1" stop-color="#5d98c8"/></linearGradient></defs>
<path d="M2 13 V7 Q2 5.5 3.5 5.5 H19 Q20.5 5.5 20.5 7 V8.5 H44.5 Q46 8.5 46 10 V14 H2 Z" fill="#f7f7f7" stroke="#c4c4c4" stroke-width="0.7"/>
<rect x="1.5" y="11.5" width="45" height="7" fill="#fafafa"/>
<rect x="1.2" y="12.8" width="45.6" height="29" rx="1.5" fill="url(#fgr1)" stroke="#5e7f9c" stroke-width="0.8"/>
<rect x="1.7" y="13.2" width="44.6" height="1" fill="#d4e6f4" opacity="0.8"/>
</svg></div><div class="lbl" style="left:252px;top:125.1px">Audio</div><div class="ic" style="left:372px;top:79.89999999999998px"><svg width="48" height="48" viewBox="0 0 48 48" >
<defs><linearGradient id="fgr2" x1="0" y1="0" x2="0" y2="1"><stop offset="0" stop-color="#afcde6"/><stop offset="0.6" stop-color="#82b3da"/><stop offset="1" stop-color="#5d98c8"/></linearGradient></defs>
<path d="M2 13 V7 Q2 5.5 3.5 5.5 H19 Q20.5 5.5 20.5 7 V8.5 H44.5 Q46 8.5 46 10 V14 H2 Z" fill="#f7f7f7" stroke="#c4c4c4" stroke-width="0.7"/>
<rect x="1.5" y="11.5" width="45" height="7" fill="#fafafa"/>
<rect x="1.2" y="12.8" width="45.6" height="29" rx="1.5" fill="url(#fgr2)" stroke="#5e7f9c" stroke-width="0.8"/>
<rect x="1.7" y="13.2" width="44.6" height="1" fill="#d4e6f4" opacity="0.8"/>
</svg></div><div class="lbl" style="left:348px;top:125.1px">Autostart</div><div class="ic" style="left:468px;top:79.89999999999998px"><svg width="48" height="48" viewBox="0 0 48 48" >
<defs><linearGradient id="fgr3" x1="0" y1="0" x2="0" y2="1"><stop offset="0" stop-color="#afcde6"/><stop offset="0.6" stop-color="#82b3da"/><stop offset="1" stop-color="#5d98c8"/></linearGradient></defs>
<path d="M2 13 V7 Q2 5.5 3.5 5.5 H19 Q20.5 5.5 20.5 7 V8.5 H44.5 Q46 8.5 46 10 V14 H2 Z" fill="#f7f7f7" stroke="#c4c4c4" stroke-width="0.7"/>
<rect x="1.5" y="11.5" width="45" height="7" fill="#fafafa"/>
<rect x="1.2" y="12.8" width="45.6" height="29" rx="1.5" fill="url(#fgr3)" stroke="#5e7f9c" stroke-width="0.8"/>
<rect x="1.7" y="13.2" width="44.6" height="1" fill="#d4e6f4" opacity="0.8"/>
</svg></div><div class="lbl" style="left:444px;top:125.1px">Developer</div><div class="ic" style="left:180px;top:187.89999999999998px"><svg width="48" height="48" viewBox="0 0 48 48" >
<defs><linearGradient id="fgr4" x1="0" y1="0" x2="0" y2="1"><stop offset="0" stop-color="#afcde6"/><stop offset="0.6" stop-color="#82b3da"/><stop offset="1" stop-color="#5d98c8"/></linearGradient></defs>
<path d="M2 13 V7 Q2 5.5 3.5 5.5 H19 Q20.5 5.5 20.5 7 V8.5 H44.5 Q46 8.5 46 10 V14 H2 Z" fill="#f7f7f7" stroke="#c4c4c4" stroke-width="0.7"/>
<rect x="1.5" y="11.5" width="45" height="7" fill="#fafafa"/>
<rect x="1.2" y="12.8" width="45.6" height="29" rx="1.5" fill="url(#fgr4)" stroke="#5e7f9c" stroke-width="0.8"/>
<rect x="1.7" y="13.2" width="44.6" height="1" fill="#d4e6f4" opacity="0.8"/>
</svg></div><div class="lbl" style="left:156px;top:233.1px">Developer</div><div class="lbl" style="left:156px;top:250.1px">Preview</div><div class="ic" style="left:276px;top:184.89999999999998px"><svg width="48" height="48" viewBox="0 0 48 48" >
<defs><linearGradient id="fkg" x1="0" y1="1" x2="1" y2="0"><stop offset="0" stop-color="#9cc2ff"/><stop offset="0.5" stop-color="#b08cf8"/><stop offset="1" stop-color="#c57bfb"/></linearGradient>
<linearGradient id="fko" x1="0" y1="0" x2="1" y2="0"><stop offset="0" stop-color="#f4a12a"/><stop offset="1" stop-color="#f7c85a"/></linearGradient></defs>
<circle cx="24" cy="24" r="24" fill="url(#fkg)"/>
<path d="M8 46 Q6 24 20 12 Q30 6 38 14 Q43 18 45 23 L37 22 Q30 26 32 40 Q30 46 24 48 Q14 48 8 46 Z" fill="#f7f7f7"/>
<path d="M12 8 L20 9 L17 11 Z" fill="#f4a12a"/>
<path d="M8 27 Q16 20 40 22" fill="none" stroke="url(#fko)" stroke-width="2.2"/>
<path d="M8 46 Q12 30 38 25" fill="none" stroke="url(#fko)" stroke-width="2.4"/>
<ellipse cx="31" cy="15" rx="2" ry="1.2" fill="#222" transform="rotate(25 31 15)"/>
</svg></div><div class="lbl" style="left:252px;top:233.1px">Falkon</div><div class="ic" style="left:372px;top:186.89999999999998px"><svg width="48" height="48" viewBox="0 0 48 48" >
<rect x="3.5" y="3.5" width="41" height="41" fill="#fdfdfd" stroke="#5a5a5a" stroke-width="0.9"/>
<rect x="4" y="39" width="40" height="5.2" fill="#dcddd6"/>
<path d="M9 12 H38 M9 17 H22 M30 17 H40 M9 30 H30 M33 30 H42 M11 34 H19 M22 34 H26" stroke="#d9d9d9" stroke-width="1"/>
<rect x="10.0" y="1" width="2.6" height="5.5" rx="1.3" fill="#e6e6e6" stroke="#444" stroke-width="0.7"/><rect x="14.6" y="1" width="2.6" height="5.5" rx="1.3" fill="#e6e6e6" stroke="#444" stroke-width="0.7"/><rect x="19.2" y="1" width="2.6" height="5.5" rx="1.3" fill="#e6e6e6" stroke="#444" stroke-width="0.7"/><rect x="23.799999999999997" y="1" width="2.6" height="5.5" rx="1.3" fill="#e6e6e6" stroke="#444" stroke-width="0.7"/><rect x="28.4" y="1" width="2.6" height="5.5" rx="1.3" fill="#e6e6e6" stroke="#444" stroke-width="0.7"/><rect x="33.0" y="1" width="2.6" height="5.5" rx="1.3" fill="#e6e6e6" stroke="#444" stroke-width="0.7"/>
<path d="M8 35 C9 24 14 12 26 7.5 C31 6 37 8 42.5 13.5 C36 13.5 33 15 30 18.5 C28 22 25 23 23 26 C19 30 13 33 8 35 Z" fill="#4677b2"/>
<path d="M15 20 L18 22 M13 26 L16 27 M22 13 L24 16" stroke="#fff" stroke-width="0.6" opacity="0.7"/>
<path d="M7.5 36.5 Q20 21 39 12.5" fill="none" stroke="#fff" stroke-width="0.9"/>
<path d="M4.5 40.5 L8.2 32.5 L10.5 34.5 Z" fill="#111"/>
</svg></div><div class="lbl" style="left:348px;top:233.1px">FeatherPad</div><div class="ic" style="left:468px;top:187.89999999999998px"><svg width="48" height="48" viewBox="0 0 48 48" >
<defs><linearGradient id="fgr7" x1="0" y1="0" x2="0" y2="1"><stop offset="0" stop-color="#afcde6"/><stop offset="0.6" stop-color="#82b3da"/><stop offset="1" stop-color="#5d98c8"/></linearGradient></defs>
<path d="M2 13 V7 Q2 5.5 3.5 5.5 H19 Q20.5 5.5 20.5 7 V8.5 H44.5 Q46 8.5 46 10 V14 H2 Z" fill="#f7f7f7" stroke="#c4c4c4" stroke-width="0.7"/>
<rect x="1.5" y="11.5" width="45" height="7" fill="#fafafa"/>
<rect x="1.2" y="12.8" width="45.6" height="29" rx="1.5" fill="url(#fgr7)" stroke="#5e7f9c" stroke-width="0.8"/>
<rect x="1.7" y="13.2" width="44.6" height="1" fill="#d4e6f4" opacity="0.8"/>
</svg></div><div class="lbl" style="left:444px;top:233.1px">Graphics</div><div class="ic" style="left:180px;top:288px"><svg width="50" height="54" viewBox="0 0 50 54" >
<rect x="10.2" y="4.9" width="35.1" height="46.5" rx="5" fill="#000"/>
<rect x="13.2" y="8" width="29" height="33" rx="2.5" fill="#262628"/>
<path d="M10.2 43 H42.5 Q44.8 46.5 42.5 50 H10.2 Z" fill="#fff"/>
<path d="M4.8 8.7 H8.6 V45 H40.5 Q42.6 47 40.5 49 H4.8 Z" fill="#b01212"/>
<rect x="10.2" y="49" width="33" height="2.4" fill="#000"/>
</svg></div><div class="lbl" style="left:156px;top:341.1px">Lector</div><div class="ic" style="left:276px;top:295.9px"><svg width="48" height="48" viewBox="0 0 48 48" >
<defs><linearGradient id="fgr9" x1="0" y1="0" x2="0" y2="1"><stop offset="0" stop-color="#afcde6"/><stop offset="0.6" stop-color="#82b3da"/><stop offset="1" stop-color="#5d98c8"/></linearGradient></defs>
<path d="M2 13 V7 Q2 5.5 3.5 5.5 H19 Q20.5 5.5 20.5 7 V8.5 H44.5 Q46 8.5 46 10 V14 H2 Z" fill="#f7f7f7" stroke="#c4c4c4" stroke-width="0.7"/>
<rect x="1.5" y="11.5" width="45" height="7" fill="#fafafa"/>
<rect x="1.2" y="12.8" width="45.6" height="29" rx="1.5" fill="url(#fgr9)" stroke="#5e7f9c" stroke-width="0.8"/>
<rect x="1.7" y="13.2" width="44.6" height="1" fill="#d4e6f4" opacity="0.8"/>
</svg></div><div class="lbl" style="left:252px;top:341.1px">Office</div><div class="ic" style="left:372px;top:295.9px"><svg width="48" height="48" viewBox="0 0 48 48" >
<defs><linearGradient id="fgr10" x1="0" y1="0" x2="0" y2="1"><stop offset="0" stop-color="#afcde6"/><stop offset="0.6" stop-color="#82b3da"/><stop offset="1" stop-color="#5d98c8"/></linearGradient></defs>
<path d="M2 13 V7 Q2 5.5 3.5 5.5 H19 Q20.5 5.5 20.5 7 V8.5 H44.5 Q46 8.5 46 10 V14 H2 Z" fill="#f7f7f7" stroke="#c4c4c4" stroke-width="0.7"/>
<rect x="1.5" y="11.5" width="45" height="7" fill="#fafafa"/>
<rect x="1.2" y="12.8" width="45.6" height="29" rx="1.5" fill="url(#fgr10)" stroke="#5e7f9c" stroke-width="0.8"/>
<rect x="1.7" y="13.2" width="44.6" height="1" fill="#d4e6f4" opacity="0.8"/>
</svg></div><div class="lbl" style="left:348px;top:341.1px">Preferences</div><div class="ic" style="left:468px;top:293.9px"><svg width="48" height="48" viewBox="0 0 48 48" >
<defs><radialGradient id="qmg" cx="0.4" cy="0.35" r="0.7"><stop offset="0" stop-color="#f4f8fb"/><stop offset="0.6" stop-color="#c8d8e6"/><stop offset="1" stop-color="#9fb8d0"/></radialGradient></defs>
<rect x="8.5" y="3.5" width="35" height="41" rx="1.5" fill="#ececec" stroke="#555" stroke-width="0.9"/>
<rect x="10" y="5" width="3.5" height="38" fill="#d9d9d9"/>
<path d="M17 8.5 H39 M17 11 H33" stroke="#aaa" stroke-width="0.9"/>
<rect x="17" y="15" width="21" height="16" fill="#93b6d8"/>
<circle cx="20.5" cy="18.5" r="2" fill="#f4f8c8"/>
<path d="M17 26 Q25 22 38 26 V31 H17 Z" fill="#6a8cb0"/>
<path d="M34 38 L42.5 46" stroke="#8a8a8a" stroke-width="3.4" stroke-linecap="round"/>
<circle cx="28" cy="31" r="9.5" fill="url(#qmg)" stroke="#f0f0f0" stroke-width="2"/>
<circle cx="28" cy="31" r="8.3" fill="none" stroke="#3a78c8" stroke-width="1.3"/>
<path d="M21 32 H35 M22 35 H34" stroke="#b8cde0" stroke-width="0.8"/>
<rect x="13" y="40" width="12" height="5" rx="1.5" fill="#cfcfcf" stroke="#aaa" stroke-width="0.5"/>
</svg></div><div class="lbl" style="left:444px;top:341.1px">qpdfview</div><div class="ic" style="left:180px;top:403.9px"><svg width="48" height="48" viewBox="0 0 48 48" >
<defs><linearGradient id="fgr12" x1="0" y1="0" x2="0" y2="1"><stop offset="0" stop-color="#afcde6"/><stop offset="0.6" stop-color="#82b3da"/><stop offset="1" stop-color="#5d98c8"/></linearGradient></defs>
<path d="M2 13 V7 Q2 5.5 3.5 5.5 H19 Q20.5 5.5 20.5 7 V8.5 H44.5 Q46 8.5 46 10 V14 H2 Z" fill="#f7f7f7" stroke="#c4c4c4" stroke-width="0.7"/>
<rect x="1.5" y="11.5" width="45" height="7" fill="#fafafa"/>
<rect x="1.2" y="12.8" width="45.6" height="29" rx="1.5" fill="url(#fgr12)" stroke="#5e7f9c" stroke-width="0.8"/>
<rect x="1.7" y="13.2" width="44.6" height="1" fill="#d4e6f4" opacity="0.8"/>
</svg></div><div class="lbl" style="left:156px;top:449.1px">Utilities</div><div class="ic" style="left:276px;top:403.9px"><svg width="48" height="48" viewBox="0 0 48 48" >
<defs><linearGradient id="fgr13" x1="0" y1="0" x2="0" y2="1"><stop offset="0" stop-color="#afcde6"/><stop offset="0.6" stop-color="#82b3da"/><stop offset="1" stop-color="#5d98c8"/></linearGradient></defs>
<path d="M2 13 V7 Q2 5.5 3.5 5.5 H19 Q20.5 5.5 20.5 7 V8.5 H44.5 Q46 8.5 46 10 V14 H2 Z" fill="#f7f7f7" stroke="#c4c4c4" stroke-width="0.7"/>
<rect x="1.5" y="11.5" width="45" height="7" fill="#fafafa"/>
<rect x="1.2" y="12.8" width="45.6" height="29" rx="1.5" fill="url(#fgr13)" stroke="#5e7f9c" stroke-width="0.8"/>
<rect x="1.7" y="13.2" width="44.6" height="1" fill="#d4e6f4" opacity="0.8"/>
</svg></div><div class="lbl" style="left:252px;top:449.1px">Video</div>
 <div class="status" style="left:6px;top:480.5px">14 item(s) (1 hidden)</div>
 <div class="status" style="left:361px;top:480.5px">Free space: 737.9 MiB (Total: 2.6 GiB)</div>
</div>

<div class="win" id="sticky" style="left:1375px;top:161px;width:300px;height:242px;background:linear-gradient(135deg,#f2f283,#ebe87a)">
 <div class="tb" style="background:linear-gradient(180deg,#f0f2f4,#d5d8dd);border-bottom:1px solid #9ca1aa"><div class="tl" style="left:8px;background:#d0d3da"></div><div class="tl" style="left:29px;background:#d0d3da"></div><div class="tl" style="left:50px;background:#d0d3da"></div><div class="t" style="left:60px;color:#9a9fab">hello</div></div>
 <div class="note">Willkommen • Welcome • <span class="gap" style="width:26px"></span> • Bienvenue •<br>Benvenuto • Bienvenido • <span class="gap" style="width:52px"></span> • Mabuhay •<br>Välkommen • <span class="gap" style="width:57.8px"></span> • Добро пожаловать •<br>Merhaba • Bonvenon • <span class="gap" style="width:52px"></span></div>
 <div class="grip2" style="background-image:radial-gradient(circle,#fafad0 0.8px,transparent 1px)"></div>
 <svg class="glyphs" width="300" height="242" viewBox="1375 161 300 242" fill="none" stroke="#2e2e2e" stroke-width="1"><path transform="translate(1527,189.5)" d="M0.5 2 H4.5 L0.5 11.3 M1.5 4.5 L5 10.5 M8 0 L7 3 M7.5 3 H11.5 L10.5 5 M9 3.5 V6.5 L6 11.5 M9 6.5 L11.7 11.3"/><path transform="translate(1540,189.5)" d="M0.8 0.5 L1.8 2 M0 4.5 H2 V9.5 L0.2 11.3 M2 10.5 Q3 11.2 4.5 11.2 H11.5 M6 0.8 L4.5 1.5 V8.5 L6.5 7.5 M7.5 10 V1 H10.7 V7.5 L9.8 7"/><path transform="translate(1528.5,208)" d="M5 0 V8.5 M5 3 H9 M5 8.5 Q1 8 1.2 10 Q1.5 11.8 4.5 11 Q6 10.5 9 11.5"/><path transform="translate(1542.5,208)" d="M3 0 L6 1.2 M1.5 5 Q5 3 7.5 4.5 Q9 6.5 7 9.5 Q5.5 11 3.5 12"/><path transform="translate(1555.5,208)" d="M2 2.5 L7.8 2.3 M1 8.5 Q1.5 10.5 4 10.5 L9 10.5"/><path transform="translate(1568.5,208)" d="M2.5 1.5 L7 0.5 L1 6 L9.5 4.8 M6 5.5 Q3.5 8.5 5 10.5 Q6 11.2 8 11.5"/><path transform="translate(1512,244.5)" d="M0.5 2 H5 M1.5 0.5 V3 M3.5 0.5 V3 M0.5 3.8 H2.3 V5.5 H0.5 Z M3 3.8 H5 V5.5 H3 Z M1 6 V12 M1 7 H5.2 M1.5 9 H5 M1.5 11 H5.5 M3 6 V11 M8.2 0 L7.4 2.6 M7.8 2.6 H11.6 L10.8 4.6 M9.4 3 V6.5 L6.6 11.8 M9.4 6.5 L11.8 11.5"/><path transform="translate(1525,244.5)" d="M0.8 0.5 L1.8 2 M0 4.5 H2 V9.5 L0.2 11.3 M2 10.5 Q3 11.2 4.5 11.2 H11.5 M6 0.8 L4.5 1.5 V8.5 L6.5 7.5 M7.5 10 V1 H10.7 V7.5 L9.8 7"/><path transform="translate(1538,244.5)" d="M6 0 V4.5 M2 1 L3.5 3.8 M10.5 1 L8.5 3.8 M0 5.5 H12 M4.5 5.5 Q4.5 9 0.5 11.5 M7.5 5.5 V10.5 Q7.5 11.3 8.5 11.3 H11.5 V9.5"/><path transform="translate(1551,244.5)" d="M0.5 0.5 H4.5 M0.5 0.5 V11.5 H5 M1 4 H3.5 V7.5 H1 M7 0 L6 3 M6.5 1.8 H11.5 M6.5 4.5 H10.5 V6.5 H6.5 Z M5.5 8 H8 V11.5 H5.5 Z M9 8 H11.5 V11.5 H9 Z"/><path d="M1460.2 227.2 L1463.4 232.2 M1464.4 227.2 V233.2 H1460.2 M1464.4 233.2 Q1466.5 229 1468.8 230.8 Q1469.8 233 1466.8 234.2 Q1467.5 236.8 1470.5 236.6 M1469.5 233.2 H1481.5 M1475.6 230.2 V233.2 M1480.8 230.2 V233.2 M1487.6 232.5 Q1487.3 236 1483 236.6 M1496.2 227.2 L1499.4 232.2 M1500.4 227.2 V233.2 H1496.2 M1500.4 233.2 H1506 M1504.5 230.4 H1509.4 M1514.3 229.3 V233.5 M1515.5 225.5 Q1512.5 225.3 1512.8 227 L1515.6 228.3"/><circle cx="1486.5" cy="231.5" r="1.4"/><circle cx="1508" cy="231.8" r="1.7"/></svg>
</div>

<div class="win act" id="shell" style="left:387px;top:261px;width:800px;height:622px;background:#fff">
 <div class="tb"><div class="tl" style="left:8px;background:#fc5c56"></div><div class="tl" style="left:29px;background:#fdbb2f"></div><div class="tl" style="left:50px;background:#28c840"></div><div class="t" style="left:60px">Shell No. 1</div></div>
 <div class="term">FreeBSD% <span class="cur"></span></div>
 <div class="strack"></div><div class="shandle"></div>
</div>

<div id="dock">
 <div class="ic" style="left:8px;top:13px"><svg width="48" height="42" viewBox="0 0 48 42" >
<defs><linearGradient id="hfg" x1="0" y1="0" x2="0" y2="1"><stop offset="0" stop-color="#aecbe2"/><stop offset="1" stop-color="#5e9ccb"/></linearGradient></defs>
<path d="M2 8 V3 Q2 1.5 3.5 1.5 H19 Q20.5 1.5 20.5 3 V4.5 H45 Q46.5 4.5 46.5 6 V10 H2 Z" fill="#f6f6f6" stroke="#c9c9c9" stroke-width="0.6"/>
<rect x="1" y="9" width="46.5" height="32" rx="1.5" fill="url(#hfg)" stroke="#4e6f8c" stroke-width="0.8"/>
<path d="M24 17.5 L32.5 25 H30 V32 H26.3 V27.5 H21.7 V32 H18 V25 H15.5 Z" fill="#5b8db8"/>
<rect x="28.5" y="17.5" width="1.8" height="3" fill="#5b8db8"/>
</svg></div><div class="ic" style="left:73px;top:8px"><svg width="46" height="46" viewBox="0 0 46 46" >
<defs><radialGradient id="glg" cx="0.5" cy="0.18" r="0.85"><stop offset="0" stop-color="#50d0f0"/><stop offset="0.55" stop-color="#3583c8"/><stop offset="1" stop-color="#224a96"/></radialGradient>
<radialGradient id="gls"><stop offset="0" stop-color="#000" stop-opacity="0.25"/><stop offset="1" stop-color="#000" stop-opacity="0"/></radialGradient>
<clipPath id="glc"><circle cx="23" cy="22.5" r="21.5"/></clipPath></defs>
<ellipse cx="23" cy="42" rx="19" ry="4" fill="url(#gls)"/>
<circle cx="23" cy="22.5" r="21.5" fill="url(#glg)"/>
<g fill="#1f5684" opacity="0.9" clip-path="url(#glc)">
<path d="M1.8 18.7 L3.6 11.6 L8.3 7.4 L14.9 5 L18.4 3.9 L24.9 3.9 L22.6 7.4 L19 8.6 L14.9 9.8 L11.9 12.2 L14.9 14.5 L9.5 16.9 L6.6 20.5 L4.8 24 L1.8 22.8 Z"/>
<path d="M8.3 26.4 L13.7 25.8 L18.4 31.1 L15.5 37 L11.9 41.8 L9.5 37 L7.2 30.5 Z"/>
<path d="M27.3 6.2 L32 6.8 L36.2 9.8 L40.3 14.5 L42.7 20.5 L40.3 25.2 L38 30.5 L34.4 38.2 L32 39.4 L30.9 33.5 L28.5 27.6 L23.8 25.8 L22.6 21.6 L25 17.5 L28.5 16.9 L32 18.1 L33.2 15.7 L28.5 14.5 L26.1 12.7 L27.3 9.8 Z"/>
</g>
<path d="M4 16 A21 21 0 0 1 30 2.5" fill="none" stroke="#9fdcf2" stroke-width="0.9" opacity="0.5"/>
</svg></div><div class="ic" style="left:136px;top:8px"><svg width="48" height="48" viewBox="0 0 48 48" >
<rect x="3.5" y="3.5" width="41" height="41" fill="#fdfdfd" stroke="#5a5a5a" stroke-width="0.9"/>
<rect x="4" y="39" width="40" height="5.2" fill="#dcddd6"/>
<path d="M9 12 H38 M9 17 H22 M30 17 H40 M9 30 H30 M33 30 H42 M11 34 H19 M22 34 H26" stroke="#d9d9d9" stroke-width="1"/>
<rect x="10.0" y="1" width="2.6" height="5.5" rx="1.3" fill="#e6e6e6" stroke="#444" stroke-width="0.7"/><rect x="14.6" y="1" width="2.6" height="5.5" rx="1.3" fill="#e6e6e6" stroke="#444" stroke-width="0.7"/><rect x="19.2" y="1" width="2.6" height="5.5" rx="1.3" fill="#e6e6e6" stroke="#444" stroke-width="0.7"/><rect x="23.799999999999997" y="1" width="2.6" height="5.5" rx="1.3" fill="#e6e6e6" stroke="#444" stroke-width="0.7"/><rect x="28.4" y="1" width="2.6" height="5.5" rx="1.3" fill="#e6e6e6" stroke="#444" stroke-width="0.7"/><rect x="33.0" y="1" width="2.6" height="5.5" rx="1.3" fill="#e6e6e6" stroke="#444" stroke-width="0.7"/>
<path d="M8 35 C9 24 14 12 26 7.5 C31 6 37 8 42.5 13.5 C36 13.5 33 15 30 18.5 C28 22 25 23 23 26 C19 30 13 33 8 35 Z" fill="#4677b2"/>
<path d="M15 20 L18 22 M13 26 L16 27 M22 13 L24 16" stroke="#fff" stroke-width="0.6" opacity="0.7"/>
<path d="M7.5 36.5 Q20 21 39 12.5" fill="none" stroke="#fff" stroke-width="0.9"/>
<path d="M4.5 40.5 L8.2 32.5 L10.5 34.5 Z" fill="#111"/>
</svg></div><div class="ic" style="left:199px;top:8px"><svg width="48" height="48" viewBox="0 0 48 48" >
<rect x="4" y="4" width="40" height="40" rx="3.5" fill="#4a4a4a" stroke="#2a2a2a" stroke-width="0.8"/>
<rect x="7" y="7" width="34" height="34" rx="1.5" fill="#232323"/>
<text x="9.5" y="23" font-family="Liberation Sans" font-weight="bold" font-size="15" fill="#f0f0f0">$</text>
<rect x="20" y="22" width="9" height="2.2" fill="#f0f0f0"/>
</svg></div><div class="ic" style="left:263px;top:6px"><svg width="50" height="50" viewBox="0 0 50 50" >
<defs><linearGradient id="bld" x1="0" y1="0" x2="0" y2="1"><stop offset="0" stop-color="#fafafa"/><stop offset="1" stop-color="#c4c4c4"/></linearGradient></defs>
<g fill="url(#bld)" stroke="#a9a9a9" stroke-width="0.5">
<path d="M12 22 L24 3 Q26 0 28 2 Q30 4 27 7 Q25 9 24 7 L17 24 Z"/>
<path d="M18 16.5 Q30 13.5 43 15 Q40 19 20 21 Z"/>
<path d="M32 34 Q35 24 37 26 Q38 30 36 36 Z"/>
<path d="M35 38 Q42 28 48 28 Q49 32 44 36 Q40 39 37 40 Z"/>
<path d="M2 40 Q5 32 11 29 L9 37 Q6 40 2 40 Z"/>
</g>
<path d="M13.5 32 V49" stroke="#e2e2e2" stroke-width="2.6"/>
<path d="M12.2 34 H14.8 M12.2 36.5 H14.8 M12.2 39 H14.8 M12.2 41.5 H14.8 M12.2 44 H14.8 M12.2 46.5 H14.8" stroke="#999" stroke-width="0.6"/>
<rect x="-3.5" y="25.6" width="47" height="10" rx="5" transform="rotate(43 19.8 30.6)" fill="#d8342a" stroke="#9e1c14" stroke-width="0.6"/>
<rect x="-2.5" y="26.4" width="45" height="3.4" rx="1.7" transform="rotate(43 19.8 30.6)" fill="#f5786a" opacity="0.55"/>
<path d="M7.2 16.2 L9.6 18.6 M9.6 16.2 L7.2 18.6" stroke="#fff" stroke-width="0.9"/>
</svg></div><div class="ic" style="left:327px;top:14px"><svg width="48" height="40" viewBox="0 0 48 40" >
<defs><linearGradient id="swg" x1="0" y1="0" x2="0" y2="1"><stop offset="0" stop-color="#f4f4f4"/><stop offset="1" stop-color="#d6d6d6"/></linearGradient></defs>
<rect x="0.5" y="0.5" width="47" height="39" rx="1.5" fill="url(#swg)" stroke="#aaa" stroke-width="0.7"/>
<circle cx="3.5" cy="3.5" r="0.9" fill="#999"/><circle cx="44.5" cy="3.5" r="0.9" fill="#999"/><circle cx="3.5" cy="36.5" r="0.9" fill="#999"/><circle cx="44.5" cy="36.5" r="0.9" fill="#999"/>
<rect x="8" y="9" width="12" height="21" rx="2" fill="#f2f2f2" stroke="#8a8a8a" stroke-width="0.8"/>
<rect x="8.5" y="9.5" width="11" height="9" rx="1.5" fill="#9a9a9a"/>
<rect x="27" y="9" width="12" height="21" rx="2" fill="#4aa8ee" stroke="#3a80c0" stroke-width="0.8"/>
<rect x="27.5" y="9.5" width="11" height="11" rx="1.5" fill="#f0f0f0"/>
</svg></div><div class="ic" style="left:396px;top:6px"><svg width="40" height="48" viewBox="0 0 40 48" >
<defs><linearGradient id="gdga" x1="0" y1="0" x2="0" y2="1"><stop offset="0" stop-color="#f4f4f4"/><stop offset="1" stop-color="#dedede"/></linearGradient></defs>
<rect x="0.5" y="0.5" width="38" height="47" rx="1" fill="url(#gdga)" stroke="#3a3d44" stroke-width="1"/>
<g transform="translate(19.5,24)" fill="#5d7190"><rect x="-2.6" y="-13" width="5.2" height="6" transform="rotate(0)"/><rect x="-2.6" y="-13" width="5.2" height="6" transform="rotate(45)"/><rect x="-2.6" y="-13" width="5.2" height="6" transform="rotate(90)"/><rect x="-2.6" y="-13" width="5.2" height="6" transform="rotate(135)"/><rect x="-2.6" y="-13" width="5.2" height="6" transform="rotate(180)"/><rect x="-2.6" y="-13" width="5.2" height="6" transform="rotate(225)"/><rect x="-2.6" y="-13" width="5.2" height="6" transform="rotate(270)"/><rect x="-2.6" y="-13" width="5.2" height="6" transform="rotate(315)"/><circle r="9.5"/></g>
<circle cx="19.5" cy="24" r="4.6" fill="#eaeaea"/>
</svg></div><div class="ic" style="left:460px;top:9px"><svg width="38" height="42" viewBox="0 0 38 42" >
<defs><linearGradient id="cgd" x1="0" y1="0" x2="0" y2="1"><stop offset="0" stop-color="#d8d8d8"/><stop offset="1" stop-color="#b4b4b4"/></linearGradient></defs>
<rect x="3" y="1" width="32" height="41" rx="2" fill="url(#cgd)" stroke="#a0a0a0" stroke-width="0.7"/>
<rect x="5" y="3" width="28" height="11" rx="1.5" fill="#3e3e3e"/>
<path d="M5 3 H33 V7 L5 10 Z" fill="#5a5a5a"/>
<text x="31" y="11.5" font-family="Liberation Mono" font-weight="bold" font-size="8" fill="#eee" text-anchor="end">3.14</text>
<rect x="6.5" y="17" width="5.6" height="4.6" rx="1.2" fill="#4a4a4a"/><rect x="13.5" y="17" width="5.6" height="4.6" rx="1.2" fill="#4a4a4a"/><rect x="20.5" y="17" width="5.6" height="4.6" rx="1.2" fill="#4a4a4a"/><rect x="27.5" y="17" width="5.6" height="4.6" rx="1.2" fill="#4a4a4a"/><rect x="6.5" y="23" width="5.6" height="4.6" rx="1.2" fill="#4a4a4a"/><rect x="13.5" y="23" width="5.6" height="4.6" rx="1.2" fill="#4a4a4a"/><rect x="20.5" y="23" width="5.6" height="4.6" rx="1.2" fill="#4a4a4a"/><rect x="27.5" y="23" width="5.6" height="4.6" rx="1.2" fill="#4a4a4a"/><rect x="6.5" y="29" width="5.6" height="4.6" rx="1.2" fill="#4a4a4a"/><rect x="13.5" y="29" width="5.6" height="4.6" rx="1.2" fill="#4a4a4a"/><rect x="20.5" y="29" width="5.6" height="4.6" rx="1.2" fill="#4a4a4a"/><rect x="6.5" y="35" width="12.6" height="4.6" rx="1.2" fill="#4a4a4a"/><rect x="20.5" y="35" width="5.6" height="4.6" rx="1.2" fill="#4a4a4a"/><rect x="27.5" y="29" width="5.6" height="10.6" rx="1.2" fill="#4a4a4a"/>
</svg></div><div class="ic" style="left:524px;top:6px"><svg width="40" height="48" viewBox="0 0 40 48" >
<defs><linearGradient id="gdgb" x1="0" y1="0" x2="0" y2="1"><stop offset="0" stop-color="#f4f4f4"/><stop offset="1" stop-color="#dedede"/></linearGradient></defs>
<rect x="0.5" y="0.5" width="38" height="47" rx="1" fill="url(#gdgb)" stroke="#3a3d44" stroke-width="1"/>
<g transform="translate(19.5,24)" fill="#5d7190"><rect x="-2.6" y="-13" width="5.2" height="6" transform="rotate(0)"/><rect x="-2.6" y="-13" width="5.2" height="6" transform="rotate(45)"/><rect x="-2.6" y="-13" width="5.2" height="6" transform="rotate(90)"/><rect x="-2.6" y="-13" width="5.2" height="6" transform="rotate(135)"/><rect x="-2.6" y="-13" width="5.2" height="6" transform="rotate(180)"/><rect x="-2.6" y="-13" width="5.2" height="6" transform="rotate(225)"/><rect x="-2.6" y="-13" width="5.2" height="6" transform="rotate(270)"/><rect x="-2.6" y="-13" width="5.2" height="6" transform="rotate(315)"/><circle r="9.5"/></g>
<circle cx="19.5" cy="24" r="4.6" fill="#eaeaea"/>
</svg></div><div class="ic" style="left:591px;top:11px"><svg width="34" height="44" viewBox="0 0 34 44" >
<defs><linearGradient id="trg" x1="0" y1="0" x2="1" y2="0"><stop offset="0" stop-color="#8a8a8a"/><stop offset="0.3" stop-color="#d8d8d8"/><stop offset="0.5" stop-color="#bdbdbd"/><stop offset="0.7" stop-color="#e6e6e6"/><stop offset="1" stop-color="#8e8e8e"/></linearGradient>
<linearGradient id="trl" x1="0" y1="0" x2="0" y2="1"><stop offset="0" stop-color="#eaeaea"/><stop offset="1" stop-color="#a8a8a8"/></linearGradient></defs>
<path d="M2.5 10 L31.5 10 L30 39 Q17 44 4 39 Z" fill="url(#trg)" stroke="#777" stroke-width="0.6"/>
<path d="M10 13 V39 M17 13 V41 M24 13 V39" stroke="#9a9a9a" stroke-width="1.2"/>
<ellipse cx="17" cy="9" rx="15.5" ry="5" fill="url(#trl)" stroke="#555" stroke-width="0.8"/>
<path d="M12 5 V2 H22 V5" fill="none" stroke="#666" stroke-width="1.2"/>
</svg></div><div class="dot" style="left:93.5px;top:56.5px;background:#000"></div><div class="dot" style="left:221.5px;top:56.5px;background:#fff"></div><div class="dot" style="left:413.5px;top:56.5px;background:#000"></div><div class="dot" style="left:477.5px;top:56.5px;background:#000"></div><div class="dot" style="left:541.5px;top:56.5px;background:#000"></div>
</div>
</body></html>
